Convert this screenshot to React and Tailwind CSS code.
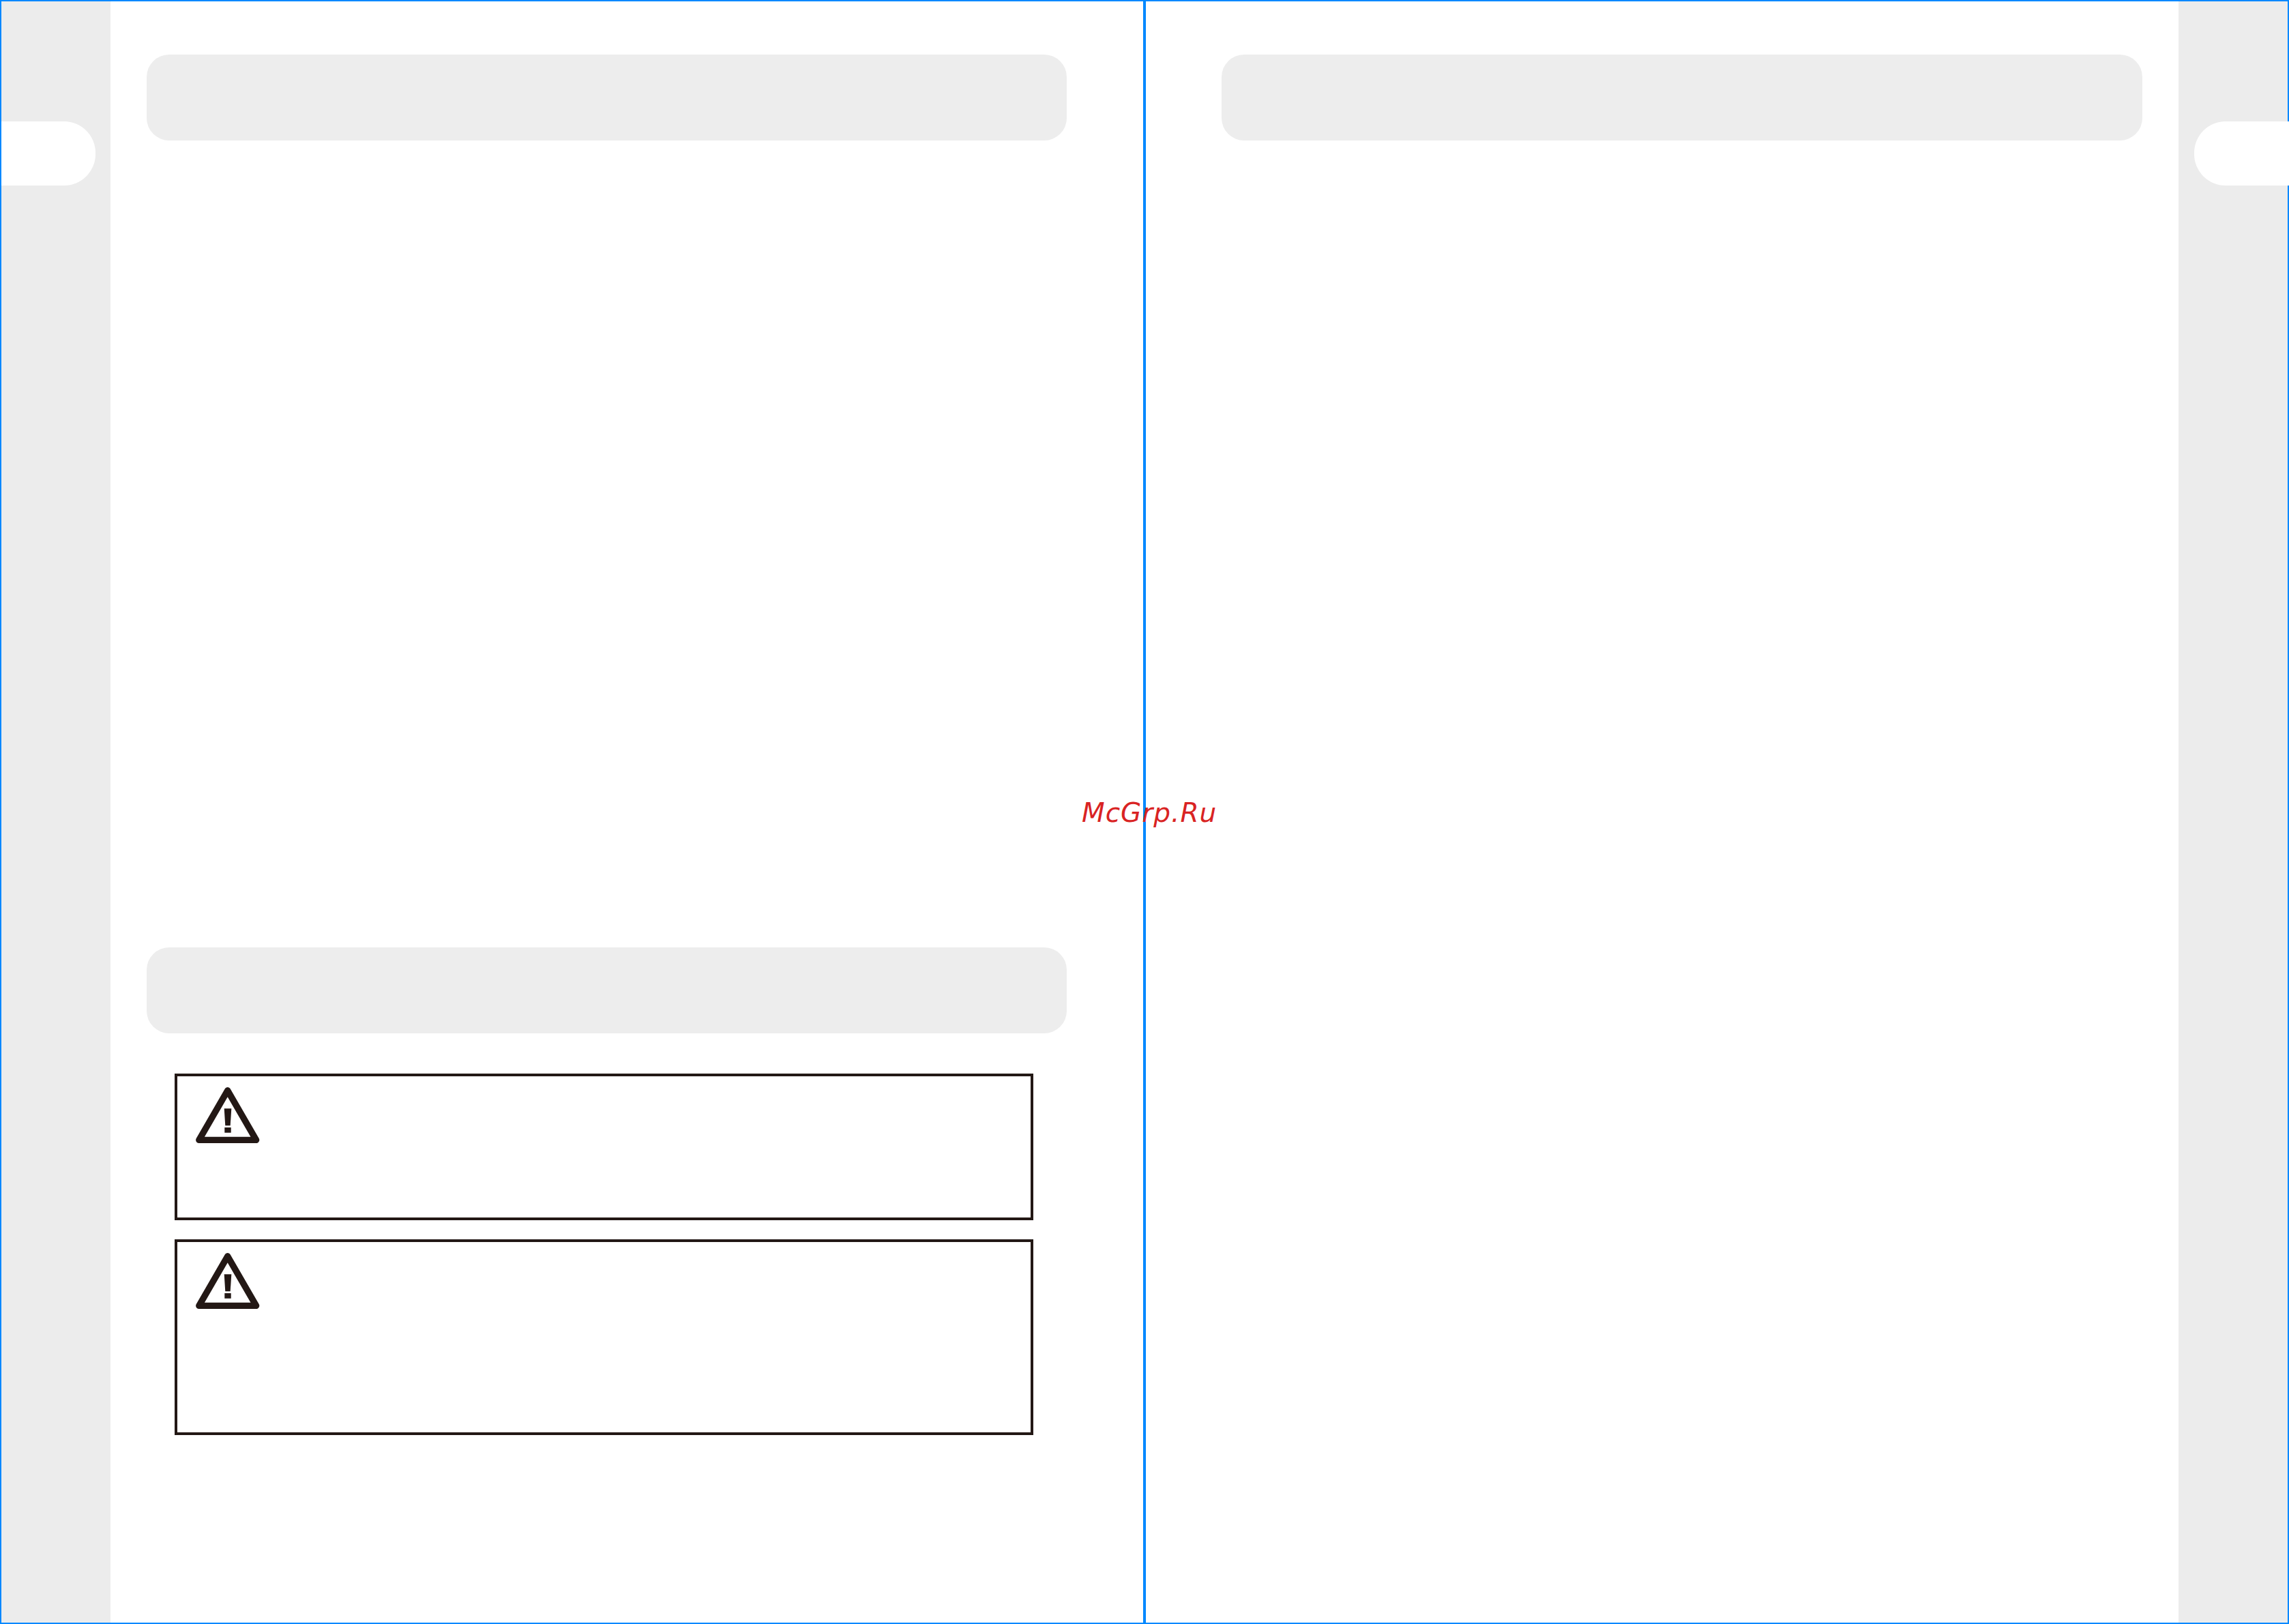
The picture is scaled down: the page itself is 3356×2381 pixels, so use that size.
import React from 'react'

function WarningIcon() {
  return (
    <svg className="ml-[27px] mt-[16px] block" width="94" height="84" viewBox="0 0 94 84">
      <path
        d="M46.7 4.8 L88.6 77.4 L4.8 77.4 Z"
        fill="none"
        stroke="#231815"
        strokeWidth="9.4"
        strokeLinejoin="round"
      />
      <path d="M41.7 31.3 L52.3 31.3 L50.7 56.3 L43.3 56.3 Z" fill="#231815" />
      <rect x="42.3" y="59" width="9.4" height="7.7" fill="#231815" />
    </svg>
  )
}

function HeaderCard() {
  return <div className="h-[126px] rounded-[33px] bg-[#ededed]" />
}

function WarningBox({ height }) {
  return (
    <div className={`${height} w-[1259px] border-4 border-[#231815] bg-white`}>
      <WarningIcon />
    </div>
  )
}

function App() {
  return (
    <div className="relative flex h-[2381px] w-[3356px] bg-white">
      <div className="flex h-full w-[1678px] border-2 border-[#0088ff]">
        <div className="h-full w-[160px] shrink-0 bg-[#ececec] pt-[176px]">
          <div className="h-[94px] w-[138px] rounded-r-[46px] bg-white" />
        </div>
        <div className="w-[1402px] pl-[53px] pt-[78px]">
          <HeaderCard />
          <div className="mt-[1183px]">
            <HeaderCard />
          </div>
          <div className="ml-[41px] mt-[59px] flex flex-col gap-[28px]">
            <WarningBox height="h-[215px]" />
            <WarningBox height="h-[287px]" />
          </div>
        </div>
      </div>

      <div className="flex h-full w-[1678px] justify-between border-2 border-[#0088ff]">
        <div className="w-[1461px] pl-[111px] pt-[78px]">
          <HeaderCard />
        </div>
        <div className="flex h-full w-[160px] shrink-0 flex-col items-end bg-[#ececec] pt-[176px]">
          <div className="-mr-[2px] h-[94px] w-[139px] rounded-l-[46px] bg-white" />
        </div>
      </div>

      <span className="absolute left-[1586px] top-[1170px] font-['DejaVu_Sans',sans-serif] text-[39px] italic leading-[44px] tracking-[1px] text-[#d92323]">
        McGrp.Ru
      </span>
    </div>
  )
}

export default App
